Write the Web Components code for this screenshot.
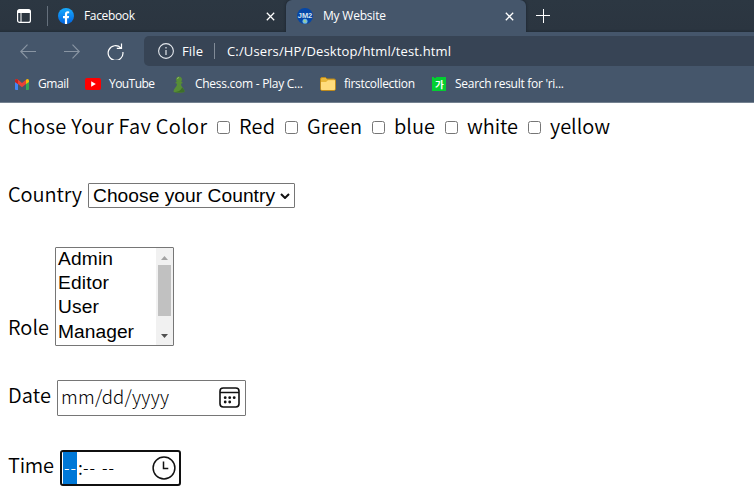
<!DOCTYPE html>
<html lang="en"><head><meta charset="utf-8"><title>My Website</title>
<style>html,body{margin:0;height:100%;overflow:hidden;background:#fff}</style></head>
<body><browser-window></browser-window>
<script>
class FitText extends HTMLElement{
 connectedCallback(){
  const r=this.attachShadow({mode:'open'});
  r.innerHTML='<style>:host{display:block;flex:none;white-space:pre}span{display:inline-block}</style><span><slot></slot></span>';
  const s=r.querySelector('span'),w=+this.getAttribute('w');
  if(w){const n=this.textContent.length;const d=w-s.getBoundingClientRect().width;if(n>1)s.style.letterSpacing=(d/(n-1))+'px';this.style.width=w+'px';}
 }}
customElements.define('fit-text',FitText);

const icons={
 workspace:[14,14,'<rect x=".6" y=".6" width="12.8" height="12.8" rx="2" fill="none" stroke="#fff" stroke-width="1.2"/><path d="M.6 4V2.6a2 2 0 0 1 2-2h8.800a2 2 0 0 1 2 2V4z" fill="#fff"/><path d="M4 4v9.500" stroke="#fff"/>'],
 facebook:[16,16,'<defs><linearGradient id="g" x2="0" y2="1"><stop stop-color="#18acfe"/><stop offset="1" stop-color="#0163e0"/></linearGradient></defs><circle cx="8" cy="8" r="8" fill="url(#g)"/><path d="M6.900 15.900V10.300H5V8h1.900V6.500C6.900 4.200 8.100 3.300 9.700 3.300q.8 0 1.500.15v1.900h-1c-.9 0-1.100.5-1.100 1.200V8h2l-.35 2.300H9.100v5.600q-1.100.15-2.200 0z" fill="#fff"/>'],
 close:[9,9,'<path d="M.8.8l7.400 7.400M8.200.8L.8 8.200" stroke="#fff" stroke-width="1.250"/>'],
 plus:[14,14,'<path d="M7.500 0v14M0 6.500h14" stroke="#fff" stroke-width="1"/>'],
 jm:[16,16,'<circle cx="8" cy="8" r="8" fill="#0547a7"/><text x="8" y="10.200" text-anchor="middle" textLength="14.500" lengthAdjust="spacingAndGlyphs" font-family="Liberation Sans,sans-serif" font-weight="bold" font-size="7.500" fill="#d8e5ef">JM2</text><circle cx="8" cy="13.200" r="2.500" fill="#76b9df"/><path d="M6.500 12l2 .2.300 2.500-1.500-.7z" fill="#a6d47b"/>'],
 back:[16,15,'<path d="M16 7.500H.8M7.500.7L.8 7.500l6.700 6.800" fill="none" stroke="#8995a3" stroke-width="1.150"/>'],
 fwd:[16,15,'<path d="M0 7.500h15.200M8.500.7l6.700 6.800-6.700 6.800" fill="none" stroke="#8995a3" stroke-width="1.150"/>'],
 reload:[17,17,'<path d="M13.800 4.800A7.400 7.400 0 1 0 15.900 9M14.500.6v4.800H9.800" fill="none" stroke="#fff" stroke-width="1.200"/>'],
 info:[16,16,'<circle cx="8" cy="8" r="7.400" fill="none" stroke="#e4e8ed" stroke-width="1.100"/><path d="M8 7v5M8 4v1.500" stroke="#d5dae0" stroke-width="1.300"/>'],
 gmail:[14,11,'<path d="M0 2h3v9H1q-1 0-1-1z" fill="#4285f4"/><path d="M11 2h3v8q0 1-1 1h-2z" fill="#34a853"/><path d="M0 2Q0 0 1.500 0 2.300 0 3 .7L7 4l4-3.300V5L7 8.200 3 5 0 3z" fill="#ea4335"/><path d="M0 2Q0 0 1.500 0 2.300 0 3 .7V5L0 3z" fill="#c5221f"/><path d="M14 2Q14 0 12.500 0q-.8 0-1.500.7V5l3-2z" fill="#fbbc04"/>'],
 youtube:[16,12,'<rect width="16" height="12" rx="2" fill="#f00"/><path d="M6.200 3.300v5.400L10.800 6z" fill="#fff"/>'],
 chess:[12,17,'<path d="M6 .5a3 3 0 0 1 2.200 5L10 7 8 7.800Q8 10.500 10 12q1.500 1.500 1.500 4Q6 17.300.5 16q0-2.500 1.500-4 2-1.500 2-4.200L2 7l1.800-1.500A3 3 0 0 1 6 .5z" fill="#578d36"/><path d="M9.200 11.500q2.300 2 2.300 4.500-5 1-10.500.2 6-.2 8.200-4.700z" fill="#3d6f2a"/><path d="M4 2.500L6 1.500" stroke="#92bb68"/>'],
 folder:[16,14,'<path d="M.5 2q0-1.500 1.500-1.500h3.500L7 2h7q1.500 0 1.500 1.500v8q0 2-1.500 2H2q-1.500 0-1.500-2z" fill="#e8b738" stroke="#bd8a1c"/><path d="M1 5h5L8 3.200h7V12q0 1-1 1H2q-1 0-1-1z" fill="#ffdc7c"/>'],
 dict:[14,14,'<path d="M0 0h2v1h2V0h10v14H0z" fill="#03cf31"/><text x="7.400" y="10.800" text-anchor="middle" font-family="Noto Sans CJK KR,sans-serif" font-weight="bold" font-size="9.500" fill="#fff">가</text>'],
 cal:[21,21,'<rect x="1" y="1" width="19" height="19" rx="3.200" fill="none" stroke="#111" stroke-width="1.600"/><path d="M1 5.500h19" stroke="#111" stroke-width="1.500"/><g fill="#111"><circle cx="6.200" cy="10.700" r="1.400"/><circle cx="10.700" cy="10.700" r="1.400"/><circle cx="15.200" cy="10.700" r="1.400"/><circle cx="6.200" cy="15" r="1.400"/><circle cx="10.700" cy="15" r="1.400"/></g>'],
 clock:[24,24,'<circle cx="12" cy="12" r="10.900" fill="none" stroke="#111" stroke-width="1.500"/><path d="M11.500 5.500v7h4.800" fill="none" stroke="#111" stroke-width="1.500"/>'],
 chevron:[10,6,'<path d="M1 1l4 4 4-4" fill="none" stroke="#111" stroke-width="2"/>'],
 up:[7,4,'<path d="M0 4l3.500-4L7 4z" fill="#a3a3a3"/>'],
 down:[7,4,'<path d="M0 0l3.500 4L7 0z" fill="#505050"/>']
};
customElements.define('ui-icon',class extends HTMLElement{connectedCallback(){
 const [w,h,p]=icons[this.getAttribute('name')];
 this.attachShadow({mode:'open'}).innerHTML=`<style>:host{display:block;flex:none;width:${w}px;height:${h}px}svg{display:block}</style><svg width="${w}" height="${h}" viewBox="0 0 ${w} ${h}">${p}</svg>`;
}});

function define(name,html){customElements.define(name,class extends HTMLElement{connectedCallback(){
 const t=document.createElement('template');t.innerHTML=html;
 this.attachShadow({mode:'open'}).append(t.content.cloneNode(true));}});}

define('tab-strip',`<style>
:host{display:flex;height:32px;background:linear-gradient(#2c3742,#2b3540 29px,#232e39);color:#fff;font-size:12px;line-height:16px}
.lead,.tab{display:flex;align-items:center;box-sizing:border-box}
.lead{width:48px;padding-left:17px}.lead i{width:1px;height:20px;background:#65707c;margin-left:16px}
.tab{width:238px;padding-left:10px}.active{width:240px;padding-left:11px;background:#45566b;border-radius:6px 6px 0 0;box-shadow:0 0 3px #17212b}
fit-text{margin-left:10px}.x{margin-left:auto;margin-right:12px}
.new{margin:9px 0 0 10px}</style>
<div class="lead"><ui-icon name="workspace"></ui-icon><i></i></div>
<div class="tab"><ui-icon name="facebook"></ui-icon><fit-text w="51">Facebook</fit-text><ui-icon class="x" name="close" style="margin-right:11px"></ui-icon></div>
<div class="tab active"><ui-icon name="jm"></ui-icon><fit-text w="63">My Website</fit-text><ui-icon class="x" name="close"></ui-icon></div>
<ui-icon class="new" name="plus"></ui-icon>`);

define('address-bar',`<style>
:host{display:flex;align-items:center;height:34px;padding-top:4px;box-sizing:border-box;color:#fff;font-size:13px;line-height:18px;position:relative;background:#45566b}
.nav{display:flex;align-items:center;width:144px;padding-left:20px;box-sizing:border-box;gap:28px}
.url{display:flex;align-items:center;flex:1;height:30px;background:#374455;border-radius:5px 0 0 5px;padding-left:14px}
.url i{width:1px;height:16px;background:#818b97;margin:0 12px 0 11px}</style>
<div class="nav"><ui-icon name="back"></ui-icon><ui-icon name="fwd"></ui-icon><ui-icon name="reload" style="margin-left:-1px"></ui-icon></div>
<div class="url"><ui-icon name="info"></ui-icon><fit-text w="21" style="margin-left:8px">File</fit-text><i></i><fit-text w="224">C:/Users/HP/Desktop/html/test.html</fit-text></div>`);

define('bookmark-bar',`<style>
:host{display:flex;align-items:center;height:36px;box-sizing:border-box;background:#45566b;color:#fff;font-size:12px;line-height:16px;padding-left:15px}
</style><ui-icon name="gmail"></ui-icon><fit-text w="31" style="margin:0 16px 0 9px">Gmail</fit-text>
<ui-icon name="youtube"></ui-icon><fit-text w="46" style="margin:0 18px 0 8px">YouTube</fit-text>
<ui-icon name="chess"></ui-icon><fit-text w="108" style="margin:0 17px 0 10px">Chess.com - Play C...</fit-text>
<ui-icon name="folder"></ui-icon><fit-text w="71" style="margin:0 17px 0 8px">firstcollection</fit-text>
<ui-icon name="dict"></ui-icon><fit-text w="109" style="margin-left:9px">Search result for 'ri...</fit-text>`);

define('check-item',`<style>:host{display:flex;align-items:center;margin-left:10px}
i{box-sizing:border-box;width:13px;height:13px;border:1px solid #767676;border-radius:2.500px;margin-right:9px;margin-top:3px;background:#fff}</style><i></i><slot></slot>`);

define('drop-list',`<style>:host{display:flex;align-items:center;box-sizing:border-box;width:207px;height:25px;border:1px solid #767676;border-radius:1px;padding:0 4px;justify-content:space-between;font:400 19.200px/23px "Liberation Sans",Arial,sans-serif}</style><slot></slot><ui-icon name="chevron"></ui-icon>`);

define('list-box',`<style>:host{display:flex;box-sizing:border-box;width:119px;height:99px;border:1px solid #767676;border-radius:1px;font:400 19.200px/22px "Liberation Sans",Arial,sans-serif}
.o{flex:1;padding:0 2px;display:grid;grid-template-rows:24px 24px 25px 24px}.bar{width:17px;background:#f1f1f1;display:flex;flex-direction:column;align-items:center;box-sizing:border-box;padding:8px 0 7px}
i{width:13px;height:51px;background:#c1c1c1;margin:5px 0 auto}</style>
<div class="o"><fit-text w="55">Admin</fit-text><fit-text w="51">Editor</fit-text><fit-text w="41">User</fit-text><fit-text w="76">Manager</fit-text></div>
<div class="bar"><ui-icon name="up"></ui-icon><i></i><ui-icon name="down"></ui-icon></div>`);

define('date-field',`<style>:host{display:flex;align-items:center;box-sizing:border-box;width:189px;height:36px;border:1px solid #767676;border-radius:1px;padding:0 5px 0 3px;justify-content:space-between;font-size:18.500px;font-weight:300}fit-text{margin-top:-4px}ui-icon{margin-top:-1px}</style><fit-text w="108">mm/dd/yyyy</fit-text><ui-icon name="cal"></ui-icon>`);

define('time-field',`<style>:host{display:flex;align-items:center;box-sizing:border-box;width:121px;height:36px;border:2px solid #101010;border-radius:3px;padding:0 3px 0 1px;font-size:16px;font-weight:350}
.sel{display:flex;align-items:center;height:32px;width:14px;background:#0078d7;color:#fff;justify-content:center}fit-text{line-height:30px;margin-top:-3px}ui-icon{margin-left:auto}</style>
<div class="sel"><fit-text w="12">--</fit-text></div><fit-text w="4" style="margin-left:1px;font-size:18px">:</fit-text><fit-text w="12" style="margin-left:1px">--</fit-text><fit-text w="12" style="margin-left:7px">--</fit-text><ui-icon name="clock"></ui-icon>`);

define('page-form',`<style>:host{display:block;padding-left:8px;color:#000;font:350 20px/30px "Noto Sans CJK KR","Noto Sans",sans-serif}
.row{display:flex;align-items:center}</style>
<div class="row" style="height:46px;padding-bottom:2px"><fit-text w="199">Chose Your Fav Color</fit-text>
<check-item><fit-text w="36">Red</fit-text></check-item><check-item><fit-text w="55">Green</fit-text></check-item><check-item><fit-text w="41">blue</fit-text></check-item><check-item><fit-text w="51">white</fit-text></check-item><check-item><fit-text w="60">yellow</fit-text></check-item></div>
<div class="row" style="height:25px;margin-top:32px"><fit-text w="74" style="margin:-3px 6px 0 0">Country</fit-text><drop-list><fit-text w="182">Choose your Country</fit-text></drop-list></div>
<div class="row" style="height:99px;margin-top:39px;align-items:flex-end"><fit-text w="41" style="margin:0 6px 4px 0">Role</fit-text><list-box></list-box></div>
<div class="row" style="height:36px;margin-top:34px"><fit-text w="43" style="margin:-6px 6px 0 0">Date</fit-text><date-field></date-field></div>
<div class="row" style="height:36px;margin-top:34px"><fit-text w="46" style="margin:-6px 6px 0 0">Time</fit-text><time-field></time-field></div>`);

define('browser-window',`<style>:host{display:block;width:754px;height:503px;overflow:hidden;background:#fff;font-family:"Open Sans","Noto Sans",sans-serif}.edge{height:1px;background:#748190}</style>
<tab-strip></tab-strip><address-bar></address-bar><bookmark-bar></bookmark-bar><div class="edge"></div><page-form></page-form>`);
</script></body></html>
